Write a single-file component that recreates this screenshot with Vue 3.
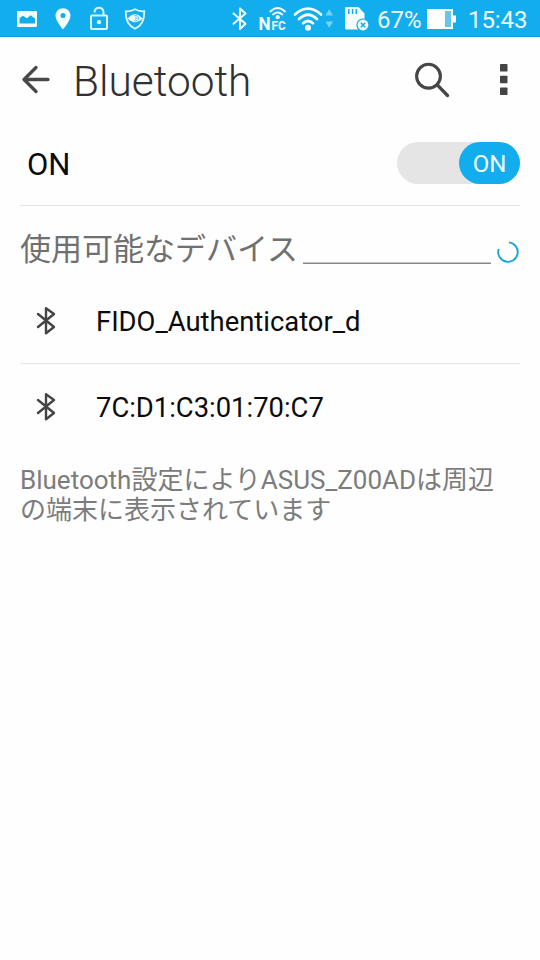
<script setup>
const devices = ['FIDO_Authenticator_d', '7C:D1:C3:01:70:C7']
</script>

<template>
  <div class="screen">
    <header class="status">
      <svg class="status-icons" width="370" height="37" viewBox="0 0 370 37" fill="none">
        <path fill="#f4fdff" fill-rule="evenodd" d="M18 11H36Q37 11 37 12V26Q37 27 36 27H18Q17 27 17 26V12Q17 11 18 11ZM19.5 18V23.500H35V18.500L30.5 15.3L27 18.3L23 15.8Z" />
        <path fill="#f4fdff" fill-rule="evenodd" d="M63 8.2C58.8 8.2 55.5 11.4 55.5 15.6C55.5 21 63 29.5 63 29.5S70.5 21 70.5 15.6C70.5 11.4 67.2 8.2 63 8.2ZM63 13A2.500 2.500 0 1 1 63 18A2.500 2.500 0 0 1 63 13Z" />
        <g stroke="#d9f5ff" stroke-width="2">
          <rect x="91" y="15.500" width="16" height="13.500" rx="1" />
          <path d="M94.500 12.500C94.500 6 103.500 6 103.500 12.500V15.500" />
        </g>
        <circle cx="99" cy="22.200" r="2.100" fill="#f4fdff" />
        <path d="M135 9.300C138 11 141 11.500 144.300 11.200C144.500 20 142 25.500 135 28.800C128 25.500 125.500 20 125.700 11.200C129 11.500 132 11 135 9.300Z" stroke="#dff7ff" stroke-width="1.800" />
        <path d="M127.500 18.500Q135 10 142.500 18.500Q135 26 127.500 18.500Z" fill="#f4fdff" />
        <path d="M134.500 15.800A2.700 2.700 0 1 1 134.500 20.600M135.200 17L136.700 18.200L135.200 19.400" stroke="#35b5e9" stroke-width=".9" />
        <path d="M233.500 13.500L245.500 23.800L240 29V8.500L245.500 13.500L233.500 23.800" stroke="#f4fdff" stroke-width="2" stroke-linejoin="round" stroke-linecap="round" />
        <text class="nfc-n" x="258.500" y="30" textLength="12" lengthAdjust="spacingAndGlyphs">N</text>
        <text class="nfc-fc" x="271.500" y="30" textLength="14" lengthAdjust="spacingAndGlyphs">FC</text>
        <g stroke="#f4fdff" stroke-linecap="round">
          <path d="M270.300 11.500Q277.700 4.500 285 11.500M273 14.500Q277.700 10.400 282.300 14.500" stroke-width="1.800" />
          <path d="M295 14.500Q308 2.800 321 14.500M299 19Q308 10.500 317 19M303 23.200Q308 18.800 313 23.200" stroke-width="2.700" />
        </g>
        <circle cx="277.700" cy="17.200" r="2.100" fill="#f4fdff" />
        <circle cx="308" cy="27.800" r="3" fill="#f4fdff" />
        <path d="M325.500 15.500L329.200 9.200L333 15.500ZM325.500 21.500H333L329.200 27.800Z" fill="#7bd2f4" />
        <path d="M346 7H358.500L364.500 13.500V28Q364.500 29.500 363 29.500H346.500Q345 29.500 345 28V8Q345 7 346 7Z" fill="#f4fdff" />
        <path d="M348.800 9V14M352.600 9V14M356.300 9V14" stroke="#12adec" stroke-width="1.500" />
        <circle cx="363" cy="25" r="6.600" fill="#12adec" />
        <circle cx="363" cy="25" r="5.400" fill="#f4fdff" />
        <path d="M360.800 22.800L365.200 27.200M365.200 22.800L360.800 27.200" stroke="#12adec" stroke-width="1.500" />
      </svg>
      <span class="percent">67%</span>
      <svg class="battery" width="30" height="20" viewBox="0 0 30 20">
        <path fill="#fff" d="M0 0H26V6.500H29V13.500H26V20H0Z" />
        <path fill="#67c5ec" d="M18 2H24V18H18Z" />
      </svg>
      <time class="clock">15:43</time>
    </header>

    <nav class="titlebar">
      <svg class="back" width="32" height="32" viewBox="0 0 32 32" fill="none" stroke="#484848" stroke-width="3.300" stroke-linecap="round" stroke-linejoin="round">
        <path d="M28 15.500H4M16 3.500L4 15.500L16 27.500" />
      </svg>
      <h1>Bluetooth</h1>
      <svg class="search" width="38" height="38" viewBox="0 0 38 38" fill="none" stroke="#464646" stroke-linecap="round">
        <circle cx="15.500" cy="15.200" r="11.900" stroke-width="3.100" />
        <path d="M24.500 24.200L34.500 34.500" stroke-width="3.300" />
      </svg>
      <svg class="more" width="8" height="32" viewBox="0 0 8 32" fill="#444">
        <rect width="7.500" height="7.500" rx=".7" /><rect y="11.800" width="7.500" height="7.500" rx=".7" /><rect y="23.500" width="7.500" height="7.500" rx=".7" />
      </svg>
    </nav>

    <main>
      <section class="power">
        <span class="state">ON</span>
        <div class="toggle"><span class="knob">ON</span></div>
      </section>
      <div class="available">
        <h2>使用可能なデバイス</h2>
        <span class="rule"></span>
        <svg class="spinner" width="24" height="24" viewBox="0 0 24 24" fill="none" stroke="#1ba5dc" stroke-width="1.900">
          <path d="M13 2.300A9.800 9.800 0 1 1 2.700 9" />
        </svg>
      </div>
      <ul>
        <li v-for="name in devices" :key="name">
          <svg class="bt" width="20" height="30" viewBox="0 0 20 30" fill="none" stroke="#444" stroke-width="2.400" stroke-linejoin="round" stroke-linecap="round">
            <path d="M2 8L18 21L10 27.300V2.300L18 8L2 21" />
          </svg>
          <span class="name">{{ name }}</span>
        </li>
      </ul>
      <p class="note">
        <span>Bluetooth設定によりASUS_Z00ADは周辺</span>
        <span>の端末に表示されています</span>
      </p>
    </main>
  </div>
</template>

<style>
body { margin: 0; background: #fefefe; }
</style>
<style scoped>
.screen { width: 540px; height: 960px; overflow: hidden; background: #fefefe; color: #0b0b0b; font-family: Roboto, "Noto Sans CJK JP", sans-serif; }
.status { display: flex; align-items: center; height: 37px; box-sizing: border-box; background: #12adec; border-bottom: 1px solid #0c98d4; color: #f2fcff; white-space: nowrap; }
.status-icons { flex: none; }
.nfc-n { font: 700 19px Roboto, sans-serif; fill: #f4fdff; }
.nfc-fc { font: 700 12px Roboto, sans-serif; fill: #f4fdff; }
.percent { width: 50px; margin-left: 7px; font-size: 24px; line-height: 34px; padding-top: 3px; }
.battery { flex: none; margin-top: 2px; }
.clock { margin-left: 11px; font-size: 24px; line-height: 34px; padding-top: 3px; letter-spacing: -.1px; }
.titlebar { display: flex; align-items: center; height: 85px; padding: 0 32px 0 20px; box-sizing: border-box; }
h1 { margin: 4px 0 0 21px; font-weight: 300; font-size: 42.4px; line-height: 50px; color: #303030; }
.search { margin-left: auto; }
.more { margin-left: 49px; }
main { padding: 0 20px; }
.power { display: flex; align-items: center; justify-content: space-between; height: 84px; box-sizing: border-box; border-bottom: 1px solid #e5e5e5; padding-left: 7px; font-size: 31px; }
.state { padding-top: 2px; }
.toggle { width: 123px; height: 42px; margin-bottom: 1px; display: flex; justify-content: flex-end; border-radius: 21px; background: #e5e5e5; }
.knob { width: 61px; height: 42px; border-radius: 21px; background: #12adec; color: #f2fcff; font-size: 24px; line-height: 45px; text-align: center; }
.available { display: flex; align-items: flex-end; height: 58px; }
h2 { flex: none; margin: 0; width: 283px; font-size: 31px; font-weight: 400; line-height: 28px; color: #707070; white-space: nowrap; }
.rule { width: 189px; height: 1px; background: #858585; border-top: 1px solid #c4c4c4; box-sizing: border-box; height: 2px; }
.spinner { margin-left: 5px; }
ul { list-style: none; margin: 14px 0 0; padding: 0; }
li { display: flex; align-items: center; height: 86px; box-sizing: border-box; border-bottom: 1px solid #e5e5e5; font-size: 27.400px; }
li:last-child { border-bottom-color: transparent; }
.bt { margin: 0 40px 0 16px; }
.name { padding-top: 2px; }
.note { margin: 15px 0 0; font-size: 26px; line-height: 30px; color: #7c7c7c; }
.note span { display: block; white-space: nowrap; }
</style>
